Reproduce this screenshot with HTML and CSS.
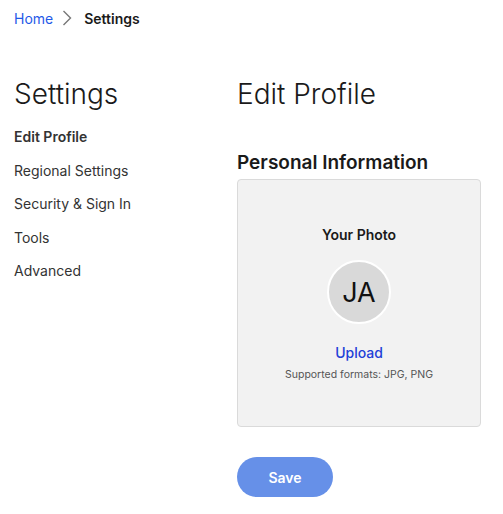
FILE: index.html
```html
<!DOCTYPE html>
<html>
<head>
<meta charset="utf-8">
<link rel="stylesheet" href="styles.css">
</head>
<body>
<div class="page">
  <nav class="breadcrumb">
    <a class="crumb-link" href="#">Home</a>
    <svg class="chevron" width="10" height="18" viewBox="0 0 10 18"><path d="M1.5 2 L8.5 9 L1.5 16" fill="none" stroke="#777" stroke-width="1.4"/></svg>
    <span class="crumb-current">Settings</span>
  </nav>
  <div class="layout">
    <aside class="sidebar">
      <h1 class="page-title">Settings</h1>
      <ul class="side-nav">
        <li class="active">Edit Profile</li>
        <li>Regional Settings</li>
        <li>Security &amp; Sign In</li>
        <li>Tools</li>
        <li>Advanced</li>
      </ul>
    </aside>
    <main class="content">
      <h2 class="content-title">Edit Profile</h2>
      <h3 class="section-title">Personal Information</h3>
      <div class="card">
        <div class="photo-label">Your Photo</div>
        <div class="avatar">JA</div>
        <a class="upload" href="#">Upload</a>
        <div class="formats">Supported formats: JPG, PNG</div>
      </div>
      <button class="save">Save</button>
    </main>
  </div>
</div>
</body>
</html>
```
FILE: styles.css
```css
* { box-sizing: border-box; }
body {
  margin: 0;
  font-family: Inter, "Noto Sans", sans-serif;
  color: #1a1a1a;
  background: #fff;
}
.page { padding: 8px 14px; }
.breadcrumb {
  display: flex;
  align-items: center;
  font-size: 14px;
  height: 20px;
}
.crumb-link { color: #1f5ae8; text-decoration: none; }
.chevron { margin: 0 12px 0 9px; }
.crumb-current { font-weight: 600; color: #1a1a1a; }
.layout {
  display: flex;
  margin-top: 49px;
}
.sidebar { width: 223px; flex: none; }
.page-title {
  margin: 0;
  font-size: 28px;
  font-weight: 300;
  line-height: 34px;
}
.side-nav {
  list-style: none;
  margin: 16px 0 0;
  padding: 0;
  font-size: 14px;
  color: #333;
}
.side-nav li { height: 33.5px; line-height: 20px; }
.side-nav li.active { font-weight: 600; }
.content { width: 244px; }
.content-title {
  margin: 0;
  font-size: 28px;
  font-weight: 300;
  line-height: 34px;
}
.section-title {
  margin: 40px 0 4px;
  font-size: 19px;
  font-weight: 600;
  line-height: 24px;
}
.card {
  height: 248px;
  background: #f2f2f2;
  border: 1px solid #dadada;
  border-radius: 4px;
  display: flex;
  flex-direction: column;
  align-items: center;
  padding-top: 46px;
}
.photo-label { font-size: 14px; font-weight: 600; line-height: 18px; }
.avatar {
  margin-top: 16px;
  width: 64px;
  height: 64px;
  border-radius: 50%;
  background: #d9d9d9;
  border: 2px solid #fff;
  display: flex;
  align-items: center;
  justify-content: center;
  font-size: 27px;
  color: #111;
}
.upload {
  margin-top: 20px;
  color: #2240d8;
  text-decoration: none;
  font-size: 14px;
  font-weight: 500;
  line-height: 18px;
}
.formats {
  margin-top: 6px;
  font-size: 10.5px;
  color: #555;
}
.save {
  margin-top: 30px;
  width: 96px;
  height: 40px;
  border: none;
  border-radius: 20px;
  background: #6690e8;
  color: #fff;
  font-family: inherit;
  font-size: 14px;
  font-weight: 600;
}
```
